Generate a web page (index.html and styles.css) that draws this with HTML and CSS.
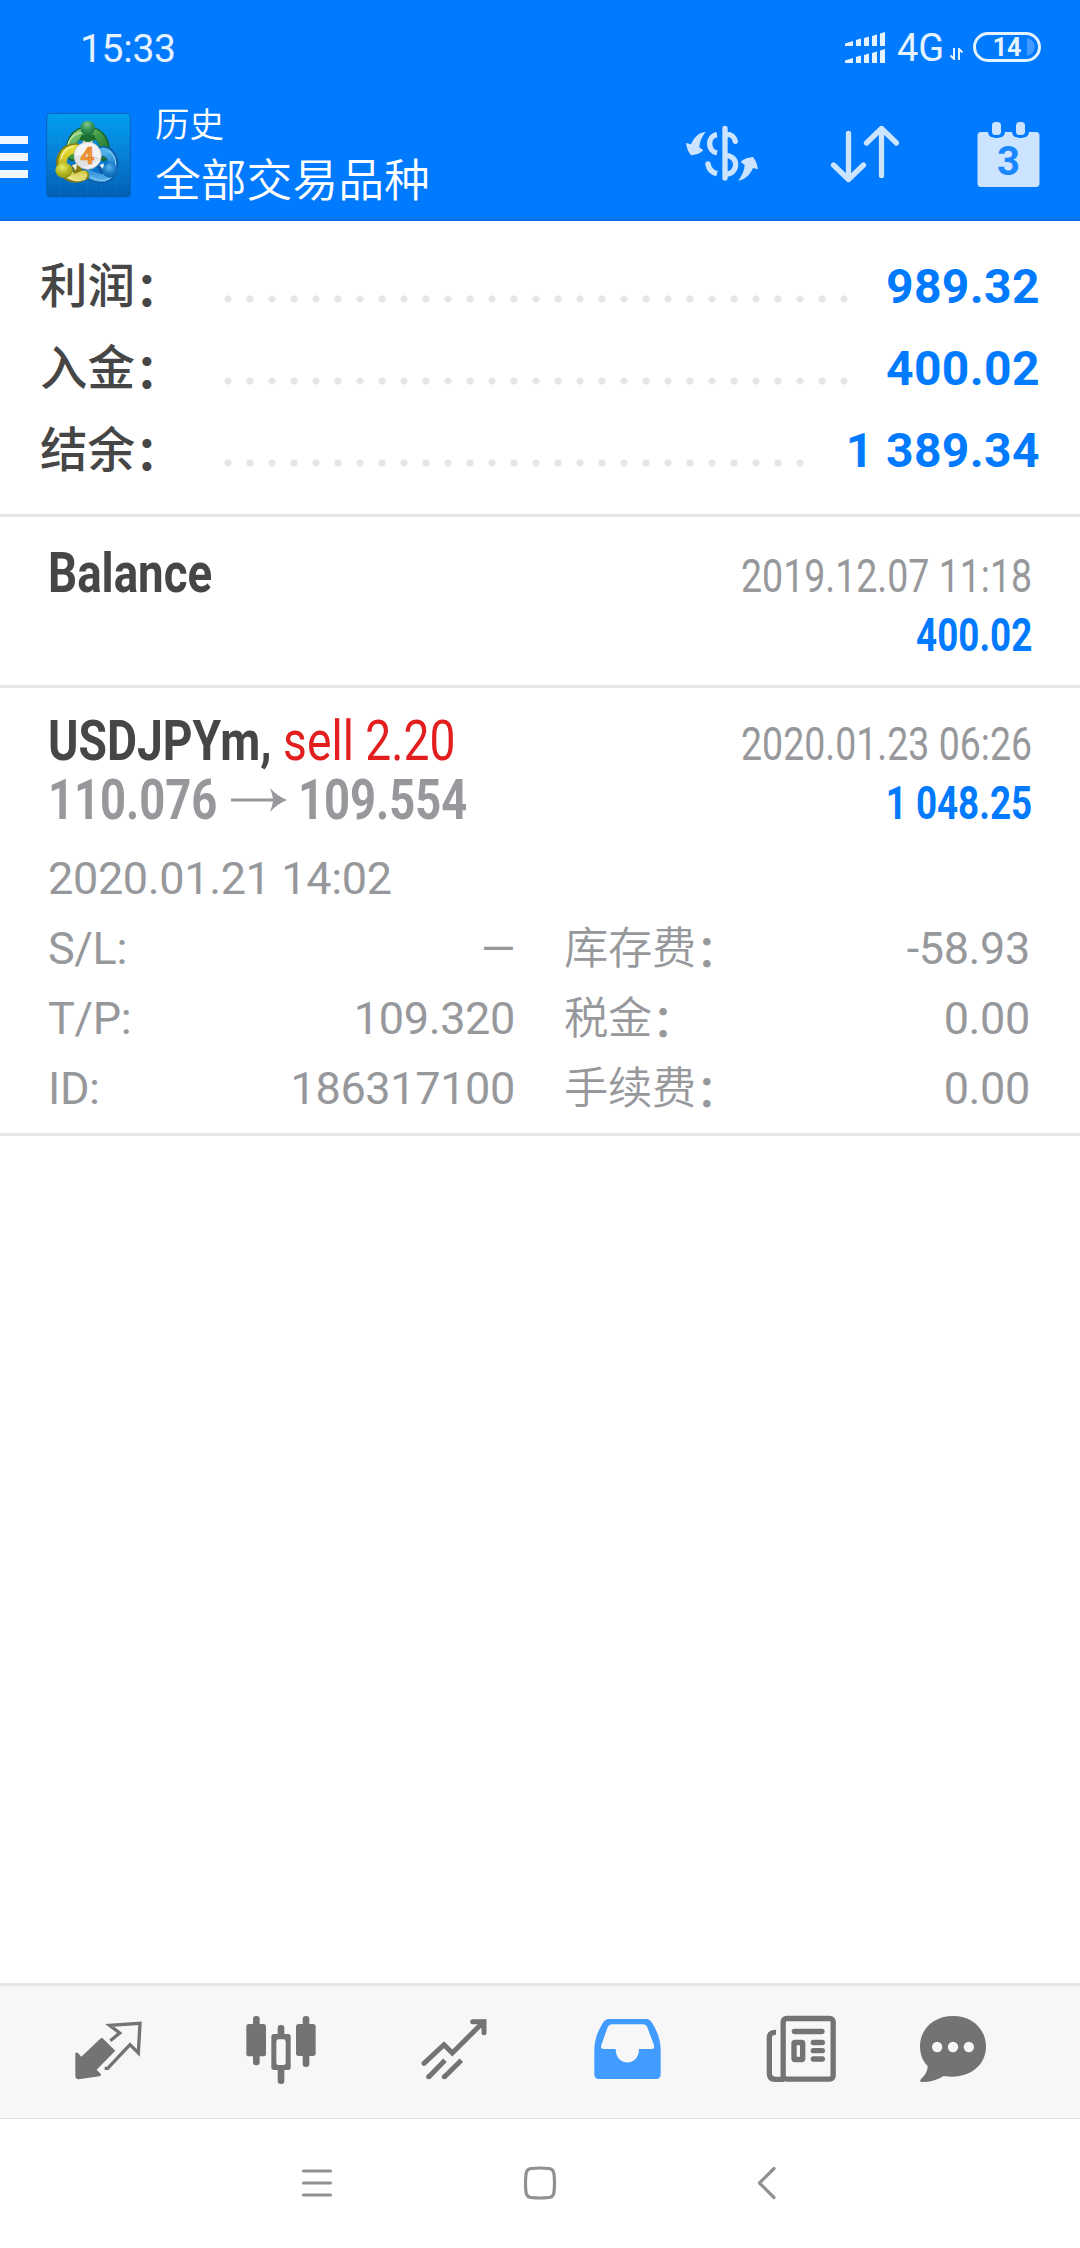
FILE: index.html
```html
<!DOCTYPE html>
<html lang="zh-CN">
<head>
<meta charset="utf-8">
<title>历史</title>
<link rel="stylesheet" href="styles.css">
</head>
<body>
<header class="header">
  <div class="status">
    <span class="clock">15:33</span>
    <div class="status-right">
      <svg class="signal" viewBox="0 0 40 31" width="40" height="31" fill="#e5f2ff">
        <path d="M0 11.500 8 9v5H0zM11 8l5-1.500v7.500h-5zM19 6l5-1.500v9.500h-5zM27 4l5-1.500v11.500h-5zM35 1.500 40 0v14h-5z"/>
        <path d="M0 28.500 8 26v5H0zM11 25l5-1.500v7.500h-5zM19 23l5-1.500v9.500h-5zM27 21l5-1.500v11.500h-5zM35 18.500 40 17v14h-5z"/>
      </svg>
      <span class="net">4G</span>
      <svg class="updown" viewBox="0 0 13 12" width="13" height="12" fill="none" stroke="#e5f2ff" stroke-width="2"><path d="M4 0v11L.5 7.500M9 12V1l3.500 3.500"/></svg>
      <span class="battery">14</span>
    </div>
  </div>
  <div class="toolbar">
    <div class="burger"><i></i><i></i><i></i></div>
    <svg class="logo" viewBox="0 0 288 288" width="96" height="96">
      <defs>
        <linearGradient id="bg" x1="0" y1="0" x2="0" y2="1"><stop offset="0" stop-color="#009ff0"/><stop offset=".5" stop-color="#0780d6"/><stop offset="1" stop-color="#005fb4"/></linearGradient>
        <linearGradient id="gr" x1="0" y1="0" x2="1" y2="1"><stop offset="0" stop-color="#8fd07c"/><stop offset=".5" stop-color="#3f9a45"/><stop offset="1" stop-color="#1f7433"/></linearGradient>
        <linearGradient id="ye" x1="0" y1="0" x2="0" y2="1"><stop offset="0" stop-color="#e6dc35"/><stop offset=".6" stop-color="#c3b51c"/><stop offset="1" stop-color="#e2dc72"/></linearGradient>
        <linearGradient id="bl" x1="0" y1="0" x2="0" y2="1"><stop offset="0" stop-color="#55b4ec"/><stop offset=".5" stop-color="#1c7fcb"/><stop offset="1" stop-color="#4fa9e6"/></linearGradient>
        <radialGradient id="gb" cx=".45" cy=".25" r=".8"><stop offset="0" stop-color="#86cc8e"/><stop offset=".45" stop-color="#37955a"/><stop offset="1" stop-color="#166b35"/></radialGradient>
        <radialGradient id="yb" cx=".4" cy=".3" r=".8"><stop offset="0" stop-color="#e9ec6a"/><stop offset=".5" stop-color="#b6ba22"/><stop offset="1" stop-color="#858a12"/></radialGradient>
        <radialGradient id="bb" cx=".45" cy=".3" r=".8"><stop offset="0" stop-color="#58b5ec"/><stop offset=".5" stop-color="#1a7cc9"/><stop offset="1" stop-color="#0a559b"/></radialGradient>
      </defs>
      <rect x="20" y="22" width="251" height="251" rx="10" fill="url(#bg)" stroke="#0a62b8" stroke-width="3"/>
      <path d="M60 24v247M101 24v247M143 24v247M184 24v247M226 24v247M22 63h247M22 105h247M22 146h247M22 188h247M22 229h247" stroke="#39a6ee" stroke-opacity=".22" stroke-width="2"/>
      <g stroke-linecap="round" fill="none">
        <path d="M98 150C84 112 105 77 143 77S202 112 190 150" stroke="#17622c" stroke-width="31"/>
        <path d="M98 148C86 112 107 78 143 78S200 112 189 148" stroke="url(#gr)" stroke-width="25"/>
        <path d="M84 116C90 90 112 79 130 80" stroke="#c0e8ae" stroke-width="4"/>
        <path d="M185 136C228 132 232 208 192 216 172 221 152 210 140 202" stroke="#0d5ea9" stroke-width="31"/>
        <path d="M188 137C224 140 229 201 193 214 172 219 155 208 143 201" stroke="url(#bl)" stroke-width="25"/>
        <path d="M205 134C228 147 230 173 224 188M154 213C174 227 203 226 215 213" stroke="#8fd2f8" stroke-width="3"/>
        <path d="M110 127C69 126 50 168 74 198 90 220 116 216 132 208" stroke="#887f12" stroke-width="31"/>
        <path d="M108 129C72 130 56 168 78 196 92 216 114 213 130 206" stroke="url(#ye)" stroke-width="25"/>
        <path d="M64 158C68 139 82 125 102 120M87 214C100 226 120 225 136 219" stroke="#f4f0a0" stroke-width="4"/>
      </g>
      <path d="M118 101 143 113 168 101 162 86H125z" fill="#1b6f2e"/><path d="M128 103l15 7 16-7-6 17h-20z" fill="#e5f2dc"/>
      <path d="M94 178l22-7 12 22-25 11z" fill="#857a0a"/><path d="M96 178l15-5-3 21z" fill="#f3f3e8"/>
      <path d="M168 180l25-8 4 26-12 8z" fill="#0d5ca6"/><path d="M178 177l13-5 2 23z" fill="#dcefff"/>
      <circle cx="143" cy="66" r="22" fill="url(#gb)"/>
      <ellipse cx="72" cy="193" rx="26" ry="23" fill="url(#yb)"/>
      <ellipse cx="210" cy="193" rx="23" ry="22" fill="url(#bb)"/>
      <circle cx="143" cy="149" r="41" fill="#f2f3f5" stroke="#b9b9b4" stroke-width="2"/>
      <path d="M103 149a40 40 0 0 0 25 37 130 130 0 0 0 54-30q-38-14-79-7z" fill="#d4d5dc" opacity=".55"/>
      <text class="logo-digit" x="142" y="175" text-anchor="middle">4</text>
    </svg>
    <div class="titles">
      <div class="title">历史</div>
      <div class="subtitle">全部交易品种</div>
    </div>
    <svg class="act-dollar" viewBox="0 0 252 228" width="84" height="76" fill="none" stroke="#cce4ff" stroke-width="16">
      <path d="M135 40v149M135 59C153 55 163 66 166 79" stroke-linecap="round"/>
      <path d="M135 121C158 121 167 136 167 148 167 166 155 177 135 178"/>
      <path d="M111 59C96 61 89 74 89 86 89 99 97 111 111 114M84 147C86 161 96 172 111 176"/>
      <circle cx="84" cy="147" r="8" fill="#cce4ff" stroke="none"/>
      <g fill="#cce4ff" stroke="none">
        <path d="M18 84 33 88C42 68 54 54 77 50 66 65 58 82 58 97L70 106C60 116 46 120 33 121 24 110 20 98 18 84z"/>
        <path d="M234 163 219 159C210 179 198 193 175 197 186 182 194 165 194 150L182 141C192 131 206 127 219 126 228 137 232 149 234 163z"/>
      </g>
    </svg>
    <svg class="act-sort" viewBox="0 0 70 60" width="70" height="60" fill="none" stroke="#cce4ff" stroke-width="5.300" stroke-linecap="round" stroke-linejoin="round"><path d="M19.500 10.500v46M4.500 42l15 14.500 15-14.500M52.500 52.500V5.500M37.500 20l15-14.500 15 14.500"/></svg>
    <svg class="act-cal" viewBox="0 0 63 66" width="63" height="66">
      <path fill="#cce4ff" d="M4 10H11C12 16 15 15 19.500 15S27 16 28 10H35C36 16 39 15 43.500 15S51 16 52 10H59Q62.500 10 62.500 13.500V61Q62.500 65 59 65H4Q.5 65 .5 61V13.500Q.5 10 4 10z"/>
      <g fill="#cce4ff" stroke="#007aff" stroke-width="3"><rect x="13.500" y="-1.500" width="12" height="16" rx="5"/><rect x="37.500" y="-1.500" width="12" height="16" rx="5"/></g>
      <text class="cal-digit" x="31.500" y="53" text-anchor="middle">3</text>
    </svg>
  </div>
</header>

<main class="main">
  <section class="summary">
    <div class="sum-row"><span class="sum-label">利润<span class="colon">：</span></span><span class="dots"></span><span class="sum-value">989.32</span></div>
    <div class="sum-row"><span class="sum-label">入金<span class="colon">：</span></span><span class="dots"></span><span class="sum-value">400.02</span></div>
    <div class="sum-row"><span class="sum-label">结余<span class="colon">：</span></span><span class="dots short"></span><span class="sum-value">1 389.34</span></div>
  </section>

  <section class="deal deal-balance">
    <div class="row"><span class="left strong name">Balance</span><span class="right date">2019.12.07 11:18</span></div>
    <div class="row"><span class="right amount">400.02</span></div>
  </section>

  <section class="deal deal-trade">
    <div class="row"><span class="left strong">USDJPYm, <span class="sell">sell 2.20</span></span><span class="right date">2020.01.23 06:26</span></div>
    <div class="row">
      <span class="prices"><span class="left price">110.076</span><svg class="arrow" viewBox="0 0 56 26" width="56" height="26" fill="#97989b"><path d="M0 11.500h42Q41 6 39 1 46 9 56 13 46 17 39 25 41 20 42 14.500H0z"/></svg><span class="left price">109.554</span></span>
      <span class="right amount">1 048.25</span>
    </div>
    <div class="details">
      <div class="wide">2020.01.21 14:02</div>
      <div class="pair"><span>S/L:</span><span class="dash">—</span></div>
      <div class="pair"><span class="cjk">库存费<span class="colon">：</span></span><span>-58.93</span></div>
      <div class="pair"><span>T/P:</span><span>109.320</span></div>
      <div class="pair"><span class="cjk">税金<span class="colon">：</span></span><span>0.00</span></div>
      <div class="pair"><span>ID:</span><span>186317100</span></div>
      <div class="pair"><span class="cjk">手续费<span class="colon">：</span></span><span>0.00</span></div>
    </div>
  </section>
</main>

<nav class="tabs">
  <svg viewBox="96 120 216 216" width="72" height="72">
    <path fill="#737373" d="M187 204 226 242 170 299 183 313Q184 318 178 319L116 328Q107 328 106 318V250Q109 246 114 249L124 260 180 207Q184 203 187 204z"/>
    <path fill="none" stroke="#737373" stroke-width="10" d="M211 212 239 189 209 166 300 160 295 249 270 224 203 295H194"/>
  </svg>
  <svg viewBox="615 120 216 216" width="72" height="72" fill="#737373" overflow="visible">
    <rect x="639" y="138" width="20" height="148" rx="9"/><rect x="619" y="162" width="59" height="97" rx="8"/>
    <rect x="788" y="138" width="20" height="153" rx="9"/><rect x="768" y="162" width="59" height="96" rx="8"/>
    <rect x="713" y="165" width="20" height="177" rx="9"/><rect x="694" y="192" width="58" height="108" rx="8"/>
    <rect x="709" y="208" width="28" height="77" rx="7" fill="#f7f7f7"/>
  </svg>
  <svg viewBox="1134 120 216 216" width="72" height="72" fill="none" stroke="#737373" stroke-width="15">
    <path stroke-linecap="round" d="M1152 280 1212 224 1237 249 1331 155M1298 155H1332V188"/>
    <path d="M1166 321 1215 271M1213 321 1264 271"/>
    <circle cx="1166" cy="320" r="7.500" fill="#737373" stroke="none"/><circle cx="1213" cy="320" r="7.500" fill="#737373" stroke="none"/>
  </svg>
  <svg viewBox="153 120 216 216" width="72" height="72">
    <path fill="#429bff" fill-rule="evenodd" d="M207 147H319Q329 147 336 158 362 198 362 240V313Q362 327 348 327H177Q163 327 163 313V240Q163 198 189 158 196 147 207 147zM217 163Q207 163 203 172L184 225Q180 237 192 237H227C227 291 297 291 297 237H333Q345 237 342 226L322 172Q318 163 308 163z"/>
  </svg>
  <svg viewBox="672 120 216 216" width="72" height="72" fill="none" stroke="#737373" stroke-width="16">
    <rect x="729.500" y="145.500" width="150" height="182" rx="10"/>
    <path d="M708 187Q688 186 688 204V310Q688 328 706 328H732"/>
    <path stroke-linecap="round" d="M763 184.500H846M820 217.500H847M820 242H847M820 267H847"/>
    <rect x="762" y="217.500" width="26" height="51" rx="3"/>
  </svg>
  <svg viewBox="1131 120 216 216" width="72" height="72">
    <path fill="#737373" d="M1239 138C1298 138 1338 178 1338 230 1338 285 1288 330 1211 318 1190 331 1168 337 1145 336 1139 335 1139 331 1144 326 1158 313 1163 301 1163 288 1147 273 1140 252 1140 229 1140 178 1180 138 1239 138z"/>
    <g fill="#f7f7f7"><circle cx="1191.500" cy="231" r="15.500"/><circle cx="1239" cy="231" r="15.500"/><circle cx="1286.500" cy="231" r="15.500"/></g>
  </svg>
</nav>

<footer class="sysnav">
  <svg viewBox="0 0 32 32" width="32" height="32"><path d="M2.500 4h27M2.500 16h27M2.500 28h27"/></svg>
  <svg viewBox="0 0 34 34" width="34" height="34"><path d="M8 2.500Q17 1.500 26 2.500 30.500 3 31 8 32 17 31 26 30.500 31 26 31.500 17 32.500 8 31.500 3.500 31 3 26 2 17 3 8 3.500 3 8 2.500z"/></svg>
  <svg viewBox="0 0 20 34" width="20" height="34"><path d="M17 2.500 2.500 17 17 31.500"/></svg>
</footer>
</body>
</html>
```
FILE: styles.css
```css
* { box-sizing: border-box; }
body {
  margin: 0;
  width: 1080px;
  height: 2248px;
  display: flex;
  flex-direction: column;
  background: #fff;
  font-family: Roboto, "Noto Sans CJK SC", sans-serif;
  overflow: hidden;
}
svg { display: block; flex: none; }

.header {
  height: 221px;
  flex: none;
  background: #007aff;
  border-bottom: 2px solid #006be2;
}
.status {
  height: 96px;
  padding: 0 39px 0 80px;
  display: flex;
  justify-content: space-between;
  color: #e5f2ff;
}
.clock { font-size: 39px; line-height: 99px; letter-spacing: -.3px; }
.status-right { display: flex; align-items: flex-start; }
.signal { margin-top: 32px; }
.net { margin-left: 12px; width: 50px; font-size: 38px; line-height: 97px; font-weight: 400; }
.updown { margin: 48px 0 0 3px; }
.battery {
  margin: 32px 0 0 10px;
  width: 68px;
  height: 30px;
  border: 3px solid #e5f2ff;
  border-radius: 15px;
  font-size: 25px;
  font-weight: 700;
  line-height: 25px;
  text-align: center;
  background: radial-gradient(ellipse 8px 9px at 0 50%, #429bff 90%, transparent) no-repeat 51px 0 / 9px 24px;
}

.toolbar { display: flex; align-items: flex-start; height: 123px; }
.burger { width: 28px; margin-top: 40px; display: grid; gap: 9px; }
.burger i { height: 8px; background: #eff6ff; }
.logo { margin: 10px 0 0 12px; }
.logo-digit { font: 700 74px Roboto, sans-serif; fill: #f29a3c; stroke: #e07d1c; stroke-width: 2px; }
.titles { width: 300px; margin: 2px 0 0 19px; color: #fff; font-family: "Noto Sans CJK SC", sans-serif; font-weight: 350; }
.title { font-size: 34.500px; line-height: 48px; }
.subtitle { font-size: 45.800px; line-height: 63px; white-space: nowrap; }
.act-dollar { margin: 19px 0 0 225px; }
.act-sort { margin: 27px 0 0 65px; }
.act-cal { margin: 26px 0 0 78px; }
.cal-digit { font: 700 40px Roboto, sans-serif; fill: #1a87ff; }

.main { flex: 1; }
.summary { height: 296px; padding: 25px 40px 0; border-bottom: 3px solid #e5e5e5; }
.sum-row { height: 82px; display: flex; align-items: baseline; font-size: 48px; line-height: 82px; }
.sum-label { width: 181px; flex: none; color: #464646; font-family: "Noto Sans CJK SC", sans-serif; font-weight: 500; font-size: 47.500px; line-height: 73px; white-space: nowrap; }
.sum-label .colon { font-weight: 700; }
.colon { position: relative; top: 3px; line-height: 0; }
.dots {
  width: 638px;
  height: 8px;
  align-self: flex-start;
  margin: 49px 0 0 -4px;
  background: radial-gradient(circle 4px at 11px 4px, #e5e5e5 3.200px, transparent 4px) repeat-x 0 0 / 22px 8px;
}
.dots.short { width: 594px; }
.sum-value { flex: 1; text-align: right; color: #007aff; font-weight: 700; letter-spacing: .4px; white-space: nowrap; }

.deal { border-bottom: 3px solid #e5e5e5; padding: 0 48px; }
.deal-balance { height: 171px; padding-top: 27px; }
.deal-trade { height: 448px; padding-top: 24px; }
.row { height: 59px; display: flex; align-items: baseline; justify-content: space-between; font-size: 55px; line-height: 59px; white-space: nowrap; }
.row::before { content: "\200b"; width: 0; }
.left { display: inline-block; transform: scaleX(.84); transform-origin: 0 50%; margin-right: auto; }
.right { display: inline-block; transform: scaleX(.815); transform-origin: 100% 50%; margin-left: auto; }
.strong { font-weight: 700; color: #464646; }
.name { transform: scaleX(.83); }
.sell { font-weight: 400; color: #e31e1e; }
.date { font-size: 46px; color: #97989b; }
.amount { font-size: 46px; font-weight: 700; color: #007aff; transform: scaleX(.8); }
.prices { display: flex; align-items: baseline; }
.price { width: 182px; margin: 0; font-weight: 700; color: #97989b; transform: scaleX(.825); }
.arrow { align-self: flex-start; margin: 16px 11px 0 1px; }

.details {
  display: grid;
  grid-template-columns: 467px 466px;
  column-gap: 49px;
  padding: 14px 0 0;
  color: #97989b;
  font-size: 45px;
  letter-spacing: -.35px;
  line-height: 70px;
}
.wide { grid-column: 1 / 3; height: 70px; }
.pair { height: 70px; display: flex; justify-content: space-between; align-items: baseline; white-space: nowrap; }
.cjk { font-family: "Noto Sans CJK SC", sans-serif; font-size: 44.300px; font-weight: 350; line-height: 62px; }
.cjk .colon { font-weight: 500; }
.dash { font-size: 44px; line-height: 68px; }

.tabs {
  height: 136px;
  flex: none;
  display: flex;
  gap: 101px;
  padding: 24px 0 0 72px;
  background: #f7f7f7;
  border-top: 3px solid #e5e5e5;
  border-bottom: 1px solid #dfdfdf;
}
.tabs svg:last-child { margin-left: -20px; }
.sysnav { height: 129px; flex: none; display: flex; padding-left: 301px; }
.sysnav svg { margin-top: 47px; fill: none; stroke: #919191; stroke-width: 3.200px; stroke-linecap: round; stroke-linejoin: round; }
.sysnav svg:first-child { margin: 48px 190px 0 0; }
.sysnav svg:last-child { margin-left: 200px; }
```
